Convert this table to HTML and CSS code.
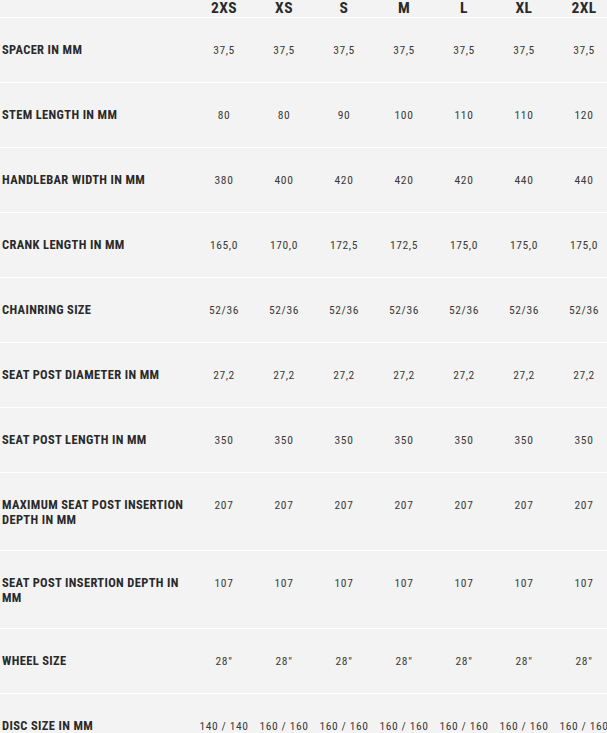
FILE: index.html
```html
<!DOCTYPE html>
<html lang="en">
<head>
<meta charset="utf-8">
<title>Geometry</title>
<link rel="stylesheet" href="styles.css">
</head>
<body>
<div class="wrap">
<table class="geo">
  <colgroup>
    <col class="c-label">
    <col class="c-size"><col class="c-size"><col class="c-size"><col class="c-size"><col class="c-size"><col class="c-size"><col class="c-size">
  </colgroup>
  <thead>
    <tr><th></th><th>2XS</th><th>XS</th><th>S</th><th>M</th><th>L</th><th>XL</th><th>2XL</th></tr>
  </thead>
  <tbody>
    <tr><td class="lbl">SPACER IN MM</td><td>37,5</td><td>37,5</td><td>37,5</td><td>37,5</td><td>37,5</td><td>37,5</td><td>37,5</td></tr>
    <tr><td class="lbl">STEM LENGTH IN MM</td><td>80</td><td>80</td><td>90</td><td>100</td><td>110</td><td>110</td><td>120</td></tr>
    <tr><td class="lbl">HANDLEBAR WIDTH IN MM</td><td>380</td><td>400</td><td>420</td><td>420</td><td>420</td><td>440</td><td>440</td></tr>
    <tr><td class="lbl">CRANK LENGTH IN MM</td><td>165,0</td><td>170,0</td><td>172,5</td><td>172,5</td><td>175,0</td><td>175,0</td><td>175,0</td></tr>
    <tr><td class="lbl">CHAINRING SIZE</td><td>52/36</td><td>52/36</td><td>52/36</td><td>52/36</td><td>52/36</td><td>52/36</td><td>52/36</td></tr>
    <tr><td class="lbl">SEAT POST DIAMETER IN MM</td><td>27,2</td><td>27,2</td><td>27,2</td><td>27,2</td><td>27,2</td><td>27,2</td><td>27,2</td></tr>
    <tr><td class="lbl">SEAT POST LENGTH IN MM</td><td>350</td><td>350</td><td>350</td><td>350</td><td>350</td><td>350</td><td>350</td></tr>
    <tr><td class="lbl">MAXIMUM SEAT POST INSERTION DEPTH IN MM</td><td>207</td><td>207</td><td>207</td><td>207</td><td>207</td><td>207</td><td>207</td></tr>
    <tr><td class="lbl">SEAT POST INSERTION DEPTH IN MM</td><td>107</td><td>107</td><td>107</td><td>107</td><td>107</td><td>107</td><td>107</td></tr>
    <tr><td class="lbl">WHEEL SIZE</td><td>28"</td><td>28"</td><td>28"</td><td>28"</td><td>28"</td><td>28"</td><td>28"</td></tr>
    <tr><td class="lbl">DISC SIZE IN MM</td><td>140 / 140</td><td>160 / 160</td><td>160 / 160</td><td>160 / 160</td><td>160 / 160</td><td>160 / 160</td><td>160 / 160</td></tr>
  </tbody>
</table>
</div>
</body>
</html>
```
FILE: styles.css
```css
html, body {
  margin: 0;
  padding: 0;
  overflow: hidden;
  background: #f3f3f3;
}
.wrap {
  width: 100%;
  overflow: hidden;
}
.geo {
  table-layout: fixed;
  border-collapse: collapse;
  width: 614px;
  color: #2e2e2e;
}
.c-label { width: 194px; }
.c-size { width: 60px; }
.geo th {
  height: 17px;
  padding: 0;
  font-family: Roboto, "Liberation Sans", sans-serif;
  font-stretch: 78%;
  font-weight: 700;
  font-size: 15.5px;
  line-height: 17px;
  letter-spacing: 0.4px;
  text-align: center;
  vertical-align: middle;
  color: #2a2a2a;
}
.geo td {
  border-top: 1px solid #ffffff;
  padding: 24px 0 23px 0;
  vertical-align: top;
  text-align: center;
  font-family: Roboto, "Liberation Sans", sans-serif;
  font-stretch: 75%;
  font-size: 11.5px;
  line-height: 17px;
  letter-spacing: 0.6px;
  color: #3a3a3a;
  white-space: nowrap;
}
.geo td.lbl {
  text-align: left;
  padding-left: 2px;
  padding-right: 6px;
  white-space: normal;
  font-stretch: 77%;
  font-weight: 700;
  font-size: 12.5px;
  line-height: 15px;
  letter-spacing: 0.35px;
  color: #2a2a2a;
}
```
